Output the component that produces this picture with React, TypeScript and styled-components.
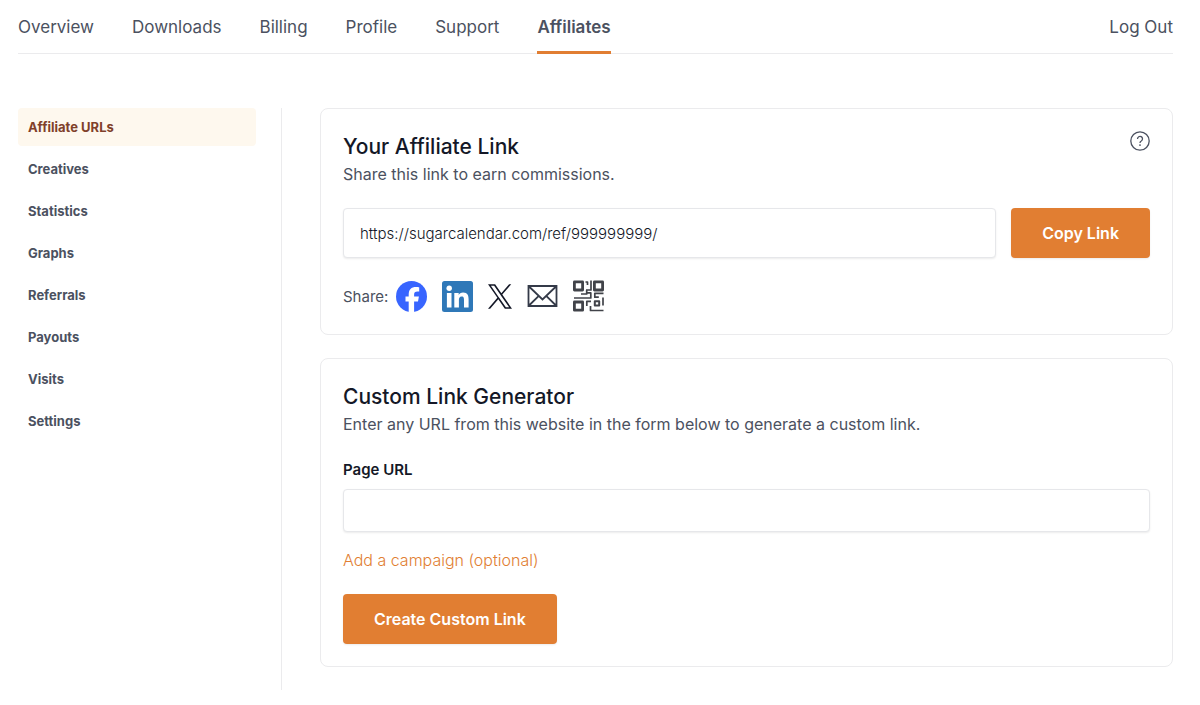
import React from "react";
import styled, { createGlobalStyle } from "styled-components";

const color = {
  accent: "#e17e32",
  ink: "#141827",
  text: "#4b5160",
  line: "#ebebed",
  activeBg: "#fef8ee",
  activeText: "#80402a",
};

const GlobalStyle = createGlobalStyle`
  *, *::before, *::after { box-sizing: border-box; }
  body {
    margin: 0;
    background: #fff;
    color: ${color.text};
    font-family: Inter, "Liberation Sans", sans-serif;
    font-size: 16px;
    -webkit-font-smoothing: antialiased;
  }
  h2, p, ul { margin: 0; padding: 0; }
  ul { list-style: none; }
  a { color: inherit; text-decoration: none; }
  button, input { font: inherit; margin: 0; }
`;

const Page = styled.div`
  padding: 0 27px 15px 18px;
`;

const TopNav = styled.nav`
  display: flex;
  gap: 38px;
  height: 54px;
  border-bottom: 1px solid ${color.line};
`;

const TopLink = styled.a<{ $active?: boolean; $end?: boolean }>`
  height: 54px;
  line-height: 54px;
  font-size: 17px;
  font-weight: ${(p) => (p.$active ? 600 : 400)};
  margin-left: ${(p) => (p.$end ? "auto" : "0")};
  box-shadow: ${(p) => (p.$active ? `inset 0 -3px ${color.accent}` : "none")};
`;

const Body = styled.div`
  display: flex;
  margin-top: 54px;
`;

const Sidebar = styled.nav`
  flex: 0 0 264px;
  min-height: 582px;
  padding-right: 25px;
  border-right: 1px solid ${color.line};
`;

const SideList = styled.ul`
  display: grid;
  gap: 4px;
`;

const SideLink = styled.a<{ $active?: boolean }>`
  display: block;
  padding: 0 10px;
  border-radius: 4px;
  line-height: 38px;
  font-size: 13px;
  font-weight: 700;
  color: ${(p) => (p.$active ? color.activeText : color.text)};
  background: ${(p) => (p.$active ? color.activeBg : "transparent")};
`;

const Content = styled.main`
  flex: 1;
  min-width: 0;
  display: flex;
  flex-direction: column;
  gap: 23px;
  margin-left: 38px;
`;

const Card = styled.section`
  display: flex;
  flex-direction: column;
  gap: 22px;
  padding: 22px;
  border: 1px solid ${color.line};
  border-radius: 8px;
`;

const CardHeader = styled.header`
  display: flex;
  justify-content: space-between;
  align-items: flex-start;
`;

const Title = styled.h2`
  color: ${color.ink};
  font-size: 21px;
  line-height: 32px;
  font-weight: 500;
`;

const Subtitle = styled.p`
  line-height: 23px;
`;

const HelpButton = styled.button`
  display: flex;
  padding: 0;
  border: 0;
  background: none;
  color: ${color.text};
  cursor: pointer;
`;

const LinkRow = styled.div`
  display: flex;
  gap: 15px;
`;

const TextInput = styled.input<{ $tall?: boolean }>`
  flex: 1;
  width: 100%;
  min-width: 0;
  height: ${(p) => (p.$tall ? 50 : 43)}px;
  padding: 0 16px;
  border: 1px solid #e6e7ea;
  border-radius: 4px;
  box-shadow: 0 1px 2px rgba(0, 0, 0, 0.08);
  background: #fff;
  color: ${color.ink};
  font-size: 15px;
  font-weight: 300;
`;

const PrimaryButton = styled.button`
  align-self: flex-start;
  height: 50px;
  padding: 0 31px;
  border: 0;
  border-radius: 4px;
  box-shadow: 0 1px 2px rgba(0, 0, 0, 0.08);
  background: ${color.accent};
  color: #fff;
  font-weight: 600;
  white-space: nowrap;
  cursor: pointer;
`;

const ShareRow = styled.div`
  display: flex;
  align-items: center;
  gap: 8px;
  height: 32px;
  font-size: 15px;
`;

const ShareList = styled.ul`
  display: flex;
  align-items: center;
  gap: 15px;
`;

const IconLink = styled.a`
  display: flex;
  color: ${color.ink};
`;

const Field = styled.div`
  display: flex;
  flex-direction: column;
  align-items: flex-start;
`;

const Label = styled.label`
  margin-bottom: 7px;
  color: ${color.ink};
  font-size: 15px;
  line-height: 24px;
  font-weight: 600;
`;

const FieldInput = styled(TextInput)`
  flex: none;
`;

const CampaignLink = styled.a`
  margin-top: 16px;
  color: ${color.accent};
  line-height: 24px;
  font-weight: 300;
`;

const FacebookIcon = () => (
  <svg width="31" height="31" viewBox="0 0 31 31" aria-hidden="true">
    <circle cx="15.5" cy="15.5" r="15.5" fill="#3865ff" />
    <path
      fill="#fff"
      d="M12.7 31V20.4H9.5v-4.8h3.2v-2c0-5.2 2.4-7.7 7.5-7.7.9 0 2.3.2 3 .4v4.3c-.4 0-1-.1-1.7-.1-2.5 0-3.400.9-3.400 3.400v1.700h4.800l-.9 4.800h-3.900V31z"
    />
  </svg>
);

const LinkedInIcon = () => (
  <svg width="31" height="31" viewBox="0 0 31 31" aria-hidden="true">
    <rect width="31" height="31" rx="2.5" fill="#2f78b8" />
    <g fill="#fff">
      <circle cx="7.2" cy="7.3" r="2.7" />
      <path d="M4.900 12h4.600v14.500H4.900zM12.300 12h4.400v2c.6-1.200 2.200-2.400 4.400-2.400 4.600 0 5.500 3 5.500 7v7.900H22v-7c0-1.700 0-3.900-2.300-3.900-2.400 0-2.800 1.800-2.800 3.700v7.200h-4.600z" />
    </g>
  </svg>
);

const XIcon = () => (
  <svg width="24" height="25" viewBox="0 0 1200 1227" fill="currentColor" aria-hidden="true">
    <path d="M714 519L1161 0H1055L667 451 357 0H0L469 682 0 1227H106L516 750 843 1227H1200L714 519ZM569 688L521 620 144 80H307L612 516 660 584 1056 1150H893L569 688Z" />
  </svg>
);

const MailIcon = () => (
  <svg width="31" height="24" viewBox="0 0 31 24" fill="none" stroke="#343a48" strokeWidth="1.8" aria-hidden="true">
    <path d="M1.5 2h28v20h-28zM2 2.500l13.500 13L29 2.500M2 21.500l9.800-9.600M29 21.500l-9.800-9.600" />
  </svg>
);

const QrIcon = () => (
  <svg width="31" height="32" viewBox="0 0 31 32" fill="none" stroke="#414349" strokeLinejoin="round" aria-hidden="true">
    <path strokeWidth="2.8" d="M1.400 1.900h8.200V10H1.400zM21.400 1.900h8.200V10h-8.200zM1.400 22h8.200v8.200H1.400z" />
    <path
      strokeWidth="1.700"
      d="M12.500 2h2v3M18 .5v9.500h-5M8 14h5.700v-4M1 18h16.800v-5.200h-4M30.500 13.300h-8.700v3.900h4M13.800 26v-4.700h4.200M30 17.500v8M17.500 26v4.500h13"
    />
    <path strokeWidth="2" d="M21.800 21.200h4.400v4.400h-4.400z" />
  </svg>
);

const HelpIcon = () => (
  <svg width="20" height="20" viewBox="0 0 20 20" fill="none" stroke="currentColor" strokeWidth="1.300" aria-hidden="true">
    <circle cx="10" cy="10" r="9.200" />
    <path d="M7.500 7.900a2.500 2.500 0 1 1 3.800 2.100c-.9.500-1.300.9-1.300 1.900" />
    <circle cx="10" cy="14.100" r=".9" fill="currentColor" stroke="none" />
  </svg>
);

const topLinks = ["Overview", "Downloads", "Billing", "Profile", "Support", "Affiliates"];
const sideLinks = ["Affiliate URLs", "Creatives", "Statistics", "Graphs", "Referrals", "Payouts", "Visits", "Settings"];
const shareTargets = [
  { name: "Facebook", Icon: FacebookIcon },
  { name: "LinkedIn", Icon: LinkedInIcon },
  { name: "X", Icon: XIcon },
  { name: "Email", Icon: MailIcon },
  { name: "QR code", Icon: QrIcon },
];

export default function App() {
  return (
    <>
      <GlobalStyle />
      <Page>
        <TopNav aria-label="Account">
          {topLinks.map((name) => (
            <TopLink key={name} href="#" $active={name === "Affiliates"}>
              {name}
            </TopLink>
          ))}
          <TopLink href="#" $end>
            Log Out
          </TopLink>
        </TopNav>
        <Body>
          <Sidebar aria-label="Affiliate area">
            <SideList>
              {sideLinks.map((name, i) => (
                <li key={name}>
                  <SideLink href="#" $active={i === 0}>
                    {name}
                  </SideLink>
                </li>
              ))}
            </SideList>
          </Sidebar>
          <Content>
            <Card>
              <CardHeader>
                <div>
                  <Title>Your Affiliate Link</Title>
                  <Subtitle>Share this link to earn commissions.</Subtitle>
                </div>
                <HelpButton type="button" aria-label="Help">
                  <HelpIcon />
                </HelpButton>
              </CardHeader>
              <LinkRow>
                <TextInput
                  $tall
                  readOnly
                  aria-label="Your affiliate link"
                  defaultValue="https://sugarcalendar.com/ref/999999999/"
                />
                <PrimaryButton type="button">Copy Link</PrimaryButton>
              </LinkRow>
              <ShareRow>
                <span>Share:</span>
                <ShareList>
                  {shareTargets.map(({ name, Icon }) => (
                    <li key={name}>
                      <IconLink href="#" aria-label={name}>
                        <Icon />
                      </IconLink>
                    </li>
                  ))}
                </ShareList>
              </ShareRow>
            </Card>
            <Card>
              <div>
                <Title>Custom Link Generator</Title>
                <Subtitle>Enter any URL from this website in the form below to generate a custom link.</Subtitle>
              </div>
              <Field>
                <Label htmlFor="page-url">Page URL</Label>
                <FieldInput id="page-url" type="text" />
                <CampaignLink href="#">Add a campaign (optional)</CampaignLink>
              </Field>
              <PrimaryButton type="button">Create Custom Link</PrimaryButton>
            </Card>
          </Content>
        </Body>
      </Page>
    </>
  );
}
